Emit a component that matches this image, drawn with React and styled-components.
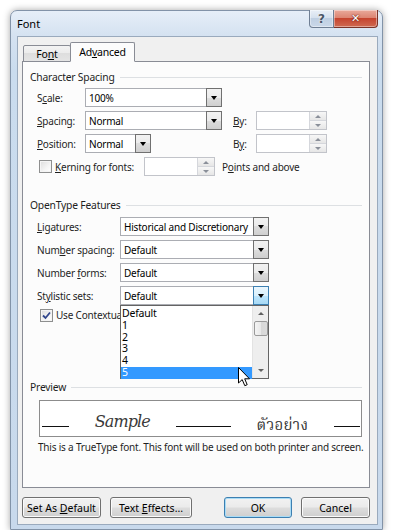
import React from 'react';
import styled, { createGlobalStyle } from 'styled-components';

const Global = createGlobalStyle`
  html, body { margin: 0; padding: 0; background: #ffffff; }
  body {
    width: 400px; height: 530px; overflow: hidden;
    font-family: "Noto Sans", "Open Sans", sans-serif;
    font-size: 10px; letter-spacing: -0.2px; color: #1f1f1f;
  }
  * { box-sizing: border-box; }
`;

const Desktop = styled.div`
  width: 400px;
  height: 530px;
  padding: 10px 0 0 10px;
`;

const Window = styled.div`
  width: 373px;
  height: 520px;
  border: 1px solid #8293a8;
  border-radius: 7px 7px 0 0;
  background: linear-gradient(180deg, #e6eef8 0px, #d5e2f1 24px, #cadcee 60px, #c8d9ec 100%);
  box-shadow: 0 0 7px rgba(0, 0, 0, 0.35);
  display: flex;
  flex-direction: column;
  padding: 0 4px 4px 6px;
`;

const TitleBar = styled.div`
  height: 25px;
  display: flex;
  align-items: flex-start;
  justify-content: space-between;
`;

const Title = styled.span`
  margin-top: 5px;
  font-size: 11px;
  letter-spacing: 0;
  color: #000;
`;

const Captions = styled.div`
  display: flex;
  margin-top: -1px;
`;

const CaptionButton = styled.div`
  height: 18px;
  width: ${p => p.$w}px;
  border: 1px solid ${p => (p.$close ? '#7a3328' : '#6f7f94')};
  border-top: none;
  border-left: ${p => (p.$close ? 'none' : '1px solid #6f7f94')};
  border-radius: ${p => (p.$close ? '0 0 4px 0' : '0 0 0 4px')};
  background: ${p =>
    p.$close
      ? 'linear-gradient(180deg, #e9a99b 0%, #dd8573 45%, #c6442f 50%, #cf6a51 100%)'
      : 'linear-gradient(180deg, #e9eff7 0%, #d6e1ee 45%, #bfcfe2 50%, #cad8e9 100%)'};
  display: flex;
  align-items: center;
  justify-content: center;
  color: ${p => (p.$close ? '#fff' : '#4a5666')};
  font-family: "DejaVu Sans", sans-serif;
  font-weight: bold;
  font-size: ${p => (p.$close ? 11 : 12)}px;
  letter-spacing: 0;
  text-shadow: ${p => (p.$close ? '0 0 2px #6a1d10, 0 0 1px #6a1d10' : '0 0 2px #ffffff')};
  box-shadow: inset 0 0 0 1px rgba(255, 255, 255, 0.4);
`;

const Client = styled.div`
  flex: 1;
  background: #f0f0f0;
  border: 1px solid #9aaabd;
  padding: 6px 7px 0 4px;
  display: flex;
  flex-direction: column;
`;

const TabStrip = styled.div`
  display: flex;
  align-items: flex-end;
  height: 19px;
  padding-left: 1px;
  position: relative;
  z-index: 1;
`;

const Tab = styled.div`
  width: ${p => p.$w}px;
  height: ${p => (p.$active ? 20 : 17)}px;
  margin-left: ${p => (p.$active ? -1 : 0)}px;
  border: 1px solid #898c95;
  border-bottom: ${p => (p.$active ? '1px solid #fcfcfc' : '1px solid #898c95')};
  border-radius: 2px 2px 0 0;
  background: ${p =>
    p.$active ? '#fcfcfc' : 'linear-gradient(180deg, #f3f3f3 0%, #ebebeb 50%, #dedede 50%, #e4e4e4 100%)'};
  display: flex;
  align-items: center;
  justify-content: center;
  padding-top: ${p => (p.$active ? 0 : 1)}px;
  font-size: 10.5px;
  color: #000;
`;

const Panel = styled.div`
  height: 427px;
  margin-top: -1px;
  border: 1px solid #898c95;
  background: #fcfcfc;
  padding: 8px 7px 0 7px;
  display: flex;
  flex-direction: column;
`;

const GroupHeader = styled.div`
  display: flex;
  align-items: center;
  gap: 5px;
  height: 14px;
  margin-top: ${p => p.$top || 0}px;
  font-size: 10.3px;
  color: #1e1e1e;
  &::after {
    content: '';
    flex: 1;
    height: 1px;
    background: #dde0e3;
  }
`;

const Row = styled.div`
  display: grid;
  grid-template-columns: ${p => p.$cols};
  align-items: center;
  height: ${p => p.$h || 23}px;
  padding-left: 7px;
  margin-top: ${p => p.$top || 0}px;
`;

const Label = styled.span`
  white-space: nowrap;
  margin-left: ${p => p.$left || 0}px;
`;

const Key = styled.span`
  text-decoration: underline;
  text-underline-offset: 1px;
`;

const ComboBox = styled.div`
  position: relative;
  width: ${p => p.$w}px;
  height: 19px;
  border: 1px solid #abadb3;
  background: #fff;
  display: flex;
  align-items: center;
  padding-left: 3px;
  color: #000;
  white-space: nowrap;
`;

const DropButton = styled.div`
  position: absolute;
  top: -1px;
  right: -1px;
  bottom: -1px;
  width: 16px;
  border: 1px solid ${p => (p.$hot ? '#3c7fb1' : '#707070')};
  background: ${p =>
    p.$hot
      ? 'linear-gradient(180deg, #eaf6fd 0%, #d9f0fc 50%, #bee6fd 50%, #a7d9f5 100%)'
      : 'linear-gradient(180deg, #f2f2f2 0%, #ebebeb 50%, #dddddd 50%, #cfcfcf 100%)'};
  display: flex;
  align-items: center;
  justify-content: center;
  &::after {
    content: '';
    border-left: 3.5px solid transparent;
    border-right: 3.5px solid transparent;
    border-top: 4px solid #000;
  }
`;

const SpinBox = styled.div`
  width: ${p => p.$w}px;
  height: 19px;
  border: 1px solid #c2c4ca;
  background: #fff;
  display: flex;
  justify-content: flex-end;
`;

const Spinner = styled.div`
  width: 17px;
  border-left: 1px solid #d5d7dc;
  display: flex;
  flex-direction: column;
`;

const SpinHalf = styled.div`
  flex: 1;
  background: linear-gradient(180deg, #f7f7f7, #e6e6e6);
  border-bottom: ${p => (p.$up ? '1px solid #d5d7dc' : 'none')};
  display: flex;
  align-items: center;
  justify-content: center;
  &::after {
    content: '';
    border-left: 3px solid transparent;
    border-right: 3px solid transparent;
    ${p => (p.$up ? 'border-bottom: 3px solid #8a8f99;' : 'border-top: 3px solid #8a8f99;')}
  }
`;

const CheckBox = styled.div`
  flex: none;
  width: 13px;
  height: 13px;
  margin-left: ${p => p.$left || 2}px;
  border: 1px solid #8e8f8f;
  background: linear-gradient(135deg, #dcdcdc 0%, #f4f4f4 60%, #ffffff 100%);
  box-shadow: inset 0 0 0 1px #f4f4f4;
  display: flex;
  align-items: center;
  justify-content: center;
`;

const CheckLine = styled.div`
  display: flex;
  align-items: center;
  gap: 3px;
  white-space: nowrap;
  overflow: hidden;
`;

const ComboHolder = styled.div`
  position: relative;
`;

const ListPopup = styled.div`
  position: absolute;
  top: 19px;
  left: 0;
  width: 149px;
  height: 74px;
  border: 1px solid #646464;
  background: #fff;
  z-index: 5;
  display: flex;
`;

const ListItems = styled.div`
  flex: 1;
  display: flex;
  flex-direction: column;
  padding-top: 2px;
`;

const ListItem = styled.div`
  height: 11.8px;
  line-height: 11.8px;
  padding-left: 1px;
  font-size: 10.5px;
  color: ${p => (p.$selected ? '#fff' : '#000')};
  background: ${p => (p.$selected ? '#3399ff' : 'transparent')};
`;

const ScrollBar = styled.div`
  width: 16px;
  background: #eeeeee;
  border-left: 1px solid #e3e3e3;
  display: flex;
  flex-direction: column;
  align-items: center;
`;

const ScrollArrow = styled.div`
  height: 15px;
  display: flex;
  align-items: center;
  justify-content: center;
  &::after {
    content: '';
    border-left: 3px solid transparent;
    border-right: 3px solid transparent;
    ${p => (p.$up ? 'border-bottom: 3px solid #606060;' : 'border-top: 3px solid #606060;')}
  }
`;

const ScrollThumb = styled.div`
  width: 14px;
  height: 15px;
  border: 1px solid #9a9a9a;
  border-radius: 2px;
  background: linear-gradient(90deg, #f4f4f4 0%, #e8e8e8 50%, #d8d8d8 51%, #dcdcdc 100%);
`;

const ScrollSpace = styled.div`
  flex: 1;
`;

const Cursor = styled.svg`
  position: absolute;
  left: 118px;
  top: 81px;
  z-index: 6;
`;

const PreviewBox = styled.div`
  margin: 6px 0 0 9px;
  height: 37px;
  border: 1px solid #8c8c8c;
  background: #fff;
  display: flex;
  align-items: flex-end;
  justify-content: space-between;
  padding: 0 1px 9px 2px;
`;

const Rule = styled.div`
  width: ${p => p.$w}px;
  height: 1px;
  background: #111;
`;

const SampleWord = styled.span`
  font-family: "DejaVu Serif", "Liberation Serif", serif;
  font-style: italic;
  font-weight: normal;
  font-size: 16px;
  line-height: 19px;
  letter-spacing: -0.9px;
  margin-bottom: -4px;
  color: #3a3a3a;
`;

const ThaiWord = styled.span`
  font-family: "Noto Serif Thai", "Noto Sans Thai", "Noto Sans", sans-serif;
  font-size: 15px;
  line-height: 15px;
  letter-spacing: 0.3px;
  margin-bottom: -7px;
  color: #333;
`;

const Note = styled.div`
  margin: 3px 0 0 8px;
  white-space: nowrap;
`;

const ButtonRow = styled.div`
  display: flex;
  gap: 9px;
  margin-top: 9px;
`;

const Button = styled.div`
  width: ${p => p.$w}px;
  height: 21px;
  margin-left: ${p => (p.$push ? 'auto' : '0')};
  border: 1px solid ${p => (p.$default ? '#3c7fb1' : '#707070')};
  border-radius: 3px;
  background: linear-gradient(180deg, #f2f2f2 0%, #ebebeb 48%, #dddddd 52%, #cfcfcf 100%);
  box-shadow: inset 0 0 0 1px ${p => (p.$default ? '#a9dcf6' : '#fbfbfb')};
  display: flex;
  align-items: center;
  justify-content: center;
  color: #000;
  font-size: 10.5px;
  letter-spacing: 0;
`;

const CheckMark = () => (
  <svg width="9" height="9" viewBox="0 0 9 9">
    <path d="M1 4.5 L3.5 7 L8 1.5" fill="none" stroke="#31468c" strokeWidth="1.8" />
  </svg>
);

const spacingCols = '48px 137px 11px 23px 71px';
const openTypeCols = '83px 149px';

export default function App() {
  return (
    <>
      <Global />
      <Desktop>
        <Window>
          <TitleBar>
            <Title>Font</Title>
            <Captions>
              <CaptionButton $w={25}>?</CaptionButton>
              <CaptionButton $w={44} $close>✕</CaptionButton>
            </Captions>
          </TitleBar>
          <Client>
            <TabStrip>
              <Tab $w={48}><span>Fo<Key>n</Key>t</span></Tab>
              <Tab $w={65} $active><span>Ad<Key>v</Key>anced</span></Tab>
            </TabStrip>
            <Panel>
              <GroupHeader>Character Spacing</GroupHeader>
              <Row $cols={spacingCols} $top={2}>
                <Label>S<Key>c</Key>ale:</Label>
                <ComboBox $w={137}>100%<DropButton /></ComboBox>
              </Row>
              <Row $cols={spacingCols}>
                <Label><Key>S</Key>pacing:</Label>
                <ComboBox $w={137}>Normal<DropButton /></ComboBox>
                <span />
                <Label><Key>B</Key>y:</Label>
                <SpinBox $w={71}><Spinner><SpinHalf $up /><SpinHalf /></Spinner></SpinBox>
              </Row>
              <Row $cols={spacingCols}>
                <Label><Key>P</Key>osition:</Label>
                <ComboBox $w={66}>Normal<DropButton /></ComboBox>
                <span />
                <Label>B<Key>y</Key>:</Label>
                <SpinBox $w={71}><Spinner><SpinHalf $up /><SpinHalf /></Spinner></SpinBox>
              </Row>
              <Row $cols="107px 71px auto">
                <CheckLine>
                  <CheckBox />
                  <span><Key>K</Key>erning for fonts:</span>
                </CheckLine>
                <SpinBox $w={71}><Spinner><SpinHalf $up /><SpinHalf /></Spinner></SpinBox>
                <Label $left={7}>P<Key>o</Key>ints and above</Label>
              </Row>

              <GroupHeader $top={20}>OpenType Features</GroupHeader>
              <Row $cols={openTypeCols} $top={3}>
                <Label><Key>L</Key>igatures:</Label>
                <ComboBox $w={149}>Historical and Discretionary<DropButton /></ComboBox>
              </Row>
              <Row $cols={openTypeCols}>
                <Label>Num<Key>b</Key>er spacing:</Label>
                <ComboBox $w={149}>Default<DropButton /></ComboBox>
              </Row>
              <Row $cols={openTypeCols}>
                <Label>Number <Key>f</Key>orms:</Label>
                <ComboBox $w={149}>Default<DropButton /></ComboBox>
              </Row>
              <Row $cols={openTypeCols}>
                <Label>St<Key>y</Key>listic sets:</Label>
                <ComboHolder>
                  <ComboBox $w={149}>Default<DropButton $hot /></ComboBox>
                  <ListPopup>
                    <ListItems>
                      {['Default', '1', '2', '3', '4', '5'].map(v => (
                        <ListItem key={v} $selected={v === '5'}>{v}</ListItem>
                      ))}
                    </ListItems>
                    <ScrollBar>
                      <ScrollArrow $up />
                      <ScrollThumb />
                      <ScrollSpace />
                      <ScrollArrow />
                    </ScrollBar>
                  </ListPopup>
                  <Cursor width="13" height="20" viewBox="0 0 13 20">
                    <path d="M0.5 0.5 L0.5 16 L4.2 12.6 L6.8 18.7 L9.2 17.7 L6.7 11.8 L11.5 11.8 Z"
                      fill="#fff" stroke="#000" strokeWidth="1" strokeLinejoin="round" />
                  </Cursor>
                </ComboHolder>
              </Row>
              <Row $cols="83px" $h={16}>
                <CheckLine>
                  <CheckBox $left={3}><CheckMark /></CheckBox>
                  <span>Use Contextual Alternates</span>
                </CheckLine>
              </Row>

              <GroupHeader $top={57}>Preview</GroupHeader>
              <PreviewBox>
                <Rule $w={27} />
                <SampleWord>Sample</SampleWord>
                <Rule $w={55} />
                <ThaiWord>ตัวอย่าง</ThaiWord>
                <Rule $w={26} />
              </PreviewBox>
              <Note>This is a TrueType font. This font will be used on both printer and screen.</Note>
            </Panel>
            <ButtonRow>
              <Button $w={79}><span>Set As <Key>D</Key>efault</span></Button>
              <Button $w={82}><span>Text <Key>E</Key>ffects...</span></Button>
              <Button $w={68} $push $default><span>OK</span></Button>
              <Button $w={69}><span>Cancel</span></Button>
            </ButtonRow>
          </Client>
        </Window>
      </Desktop>
    </>
  );
}
